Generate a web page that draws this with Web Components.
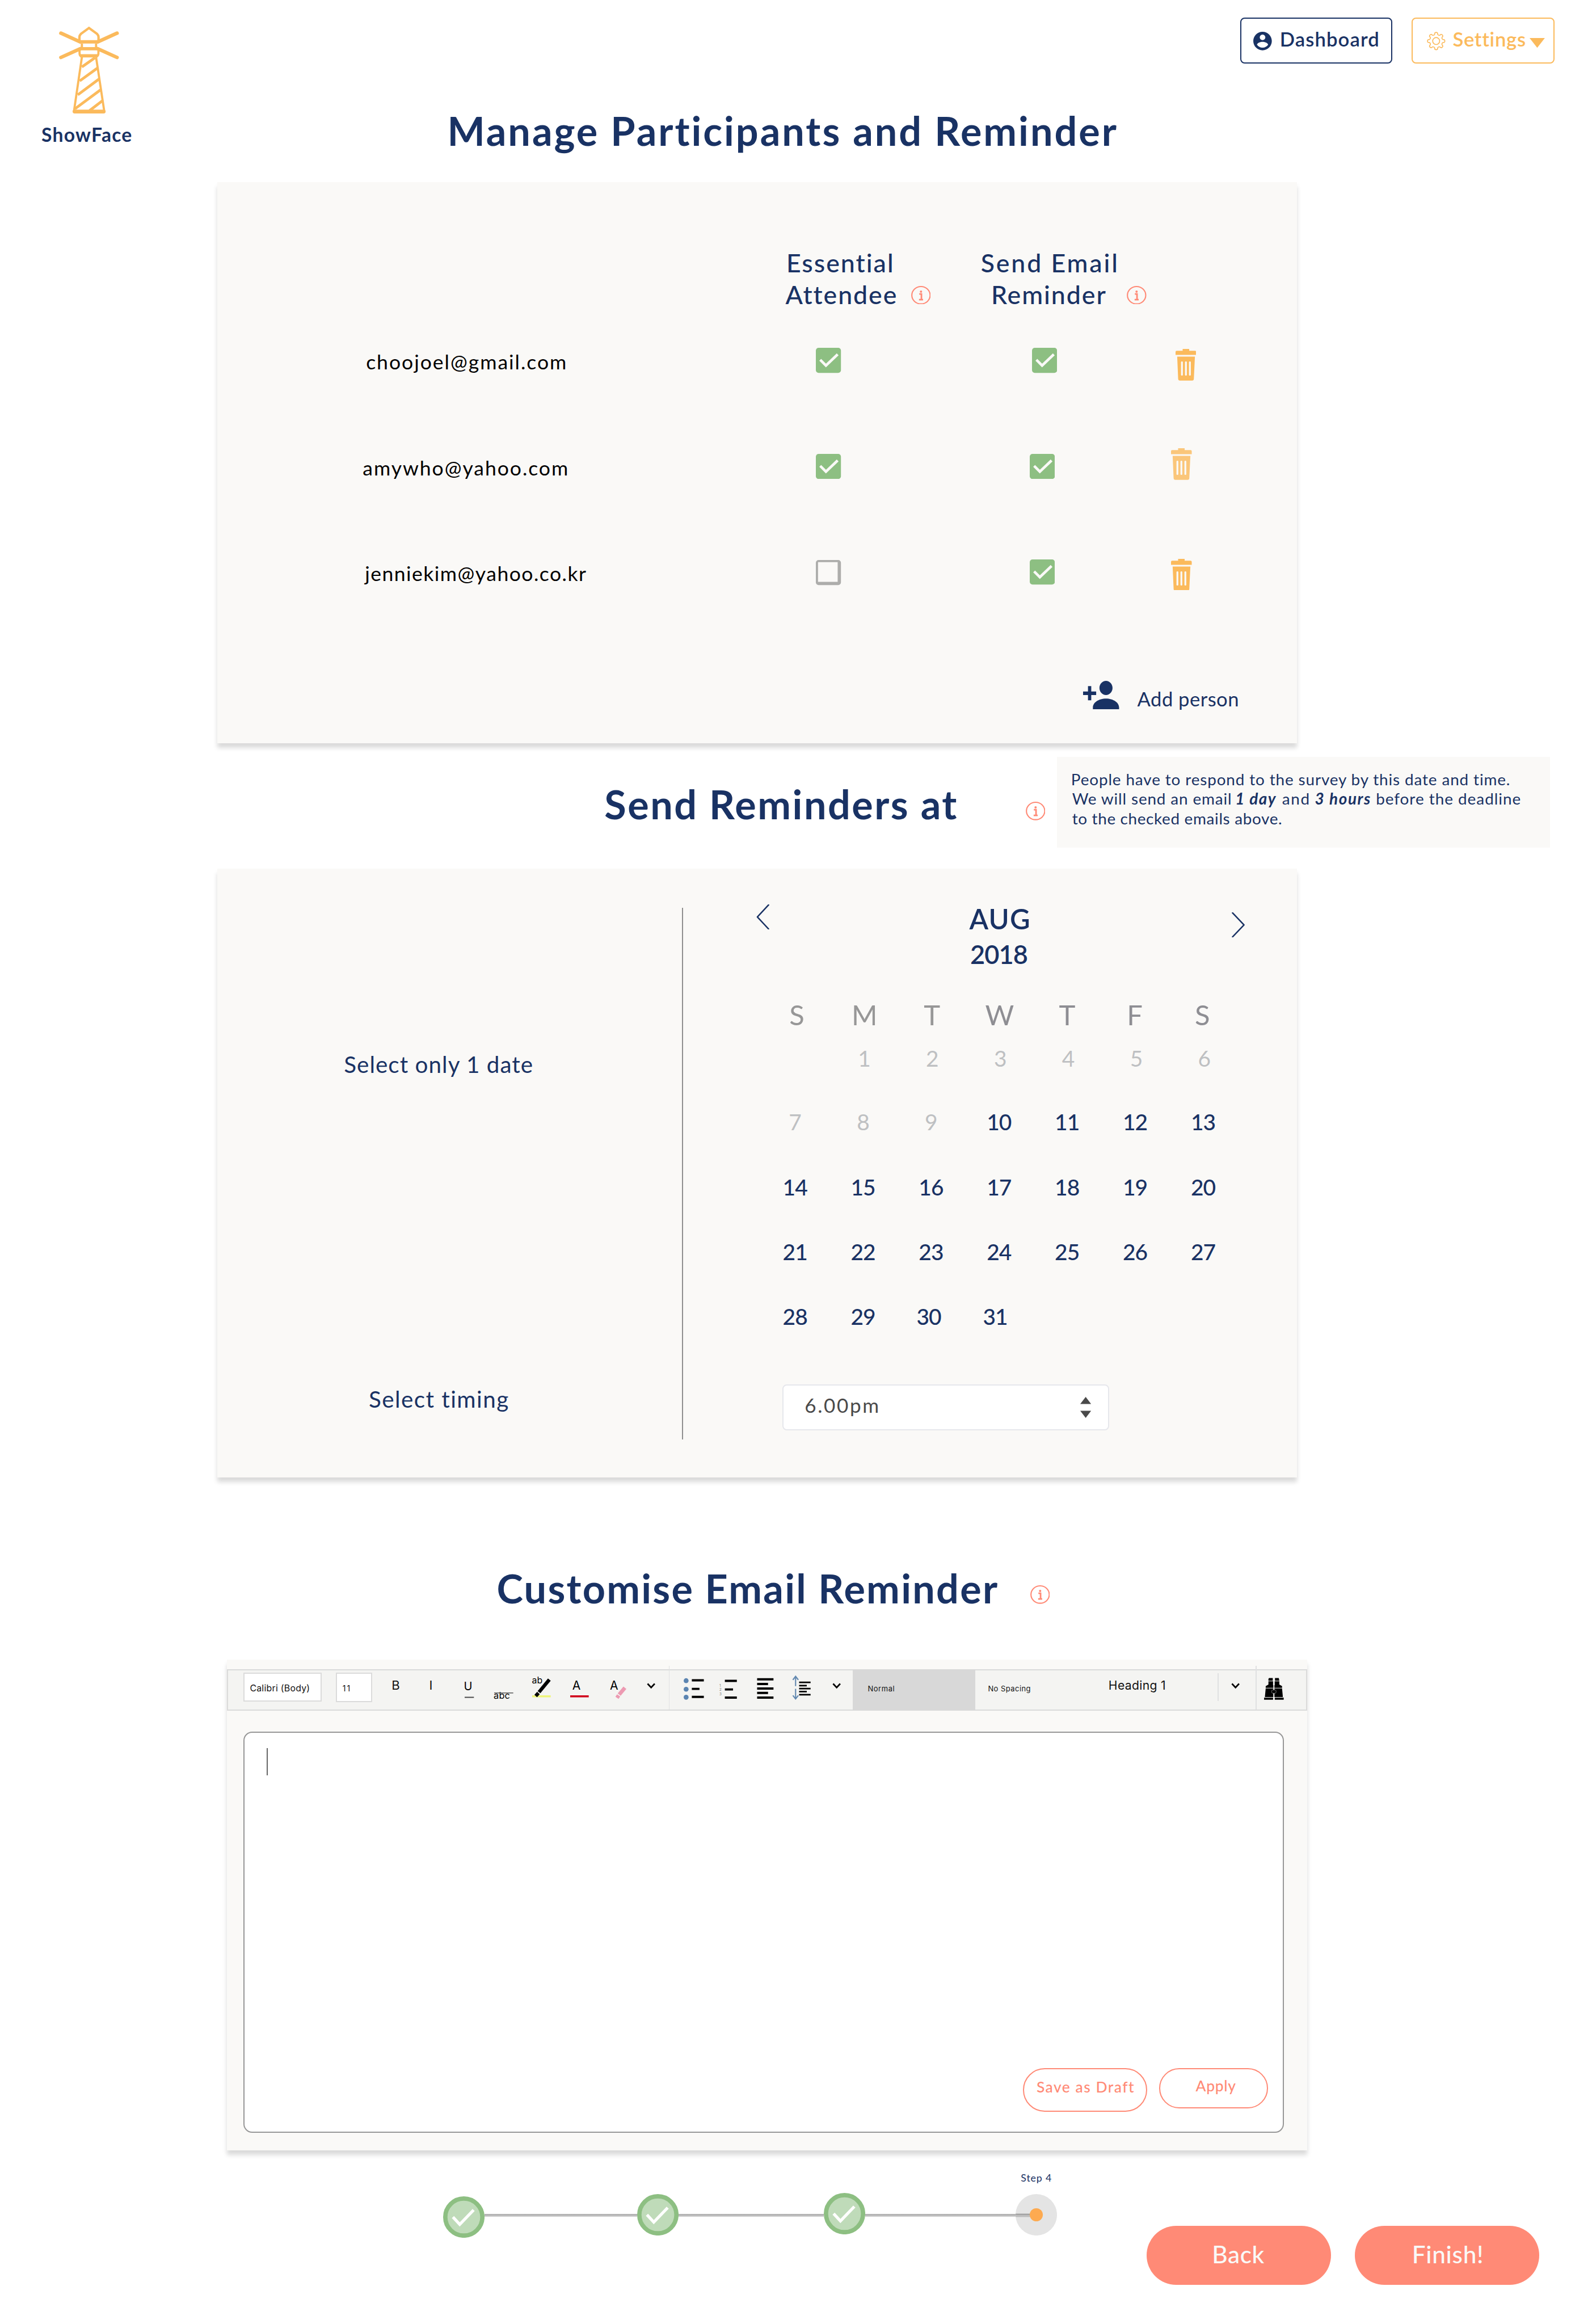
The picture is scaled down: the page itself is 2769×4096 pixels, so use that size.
<!DOCTYPE html>
<html lang="en">
<head>
<meta charset="utf-8">
<title>ShowFace</title>
<style>
html,body{margin:0;padding:0;background:#fff}
body{overflow:hidden}
show-face-app{zoom:.961458}
</style>
</head>
<body>
<show-face-app></show-face-app>
<script>
const NAVY='#193264', ORANGE='#FBBA5C', CORAL='#FF8A76', GREEN='#8DBF82';

function define(name, html, setup){
  customElements.define(name, class extends HTMLElement{
    connectedCallback(){
      if(this.shadowRoot) return;
      const root=this.attachShadow({mode:'open'});
      root.innerHTML=typeof html==='function'?html(this):html;
      if(setup) setup(this,root);
    }
  });
}

const ctx=document.createElement('canvas').getContext('2d');
/* Line height that puts the baseline of a family at the given fraction of the font size. */
function lineFor(family, base){
  ctx.font=`400 200px ${family}`;
  const m=ctx.measureText('H');
  return 2*(base-(m.fontBoundingBoxAscent-m.fontBoundingBoxDescent)/400);
}
const LATO_LINE=lineFor('Lato',.774), INTER_LINE=lineFor('Inter',.7276);

/* One line of text tracked out to a given ink width; the bottom of its box is the baseline. */
define('fit-text', el=>{
  const size=+el.getAttribute('size'), w=+el.getAttribute('w'), wt=el.getAttribute('weight')||400;
  const inter=el.hasAttribute('ui'), it=el.hasAttribute('italic')?'italic ':'';
  const fam=inter?'Inter':'Lato', text=el.textContent.trim();
  ctx.font=`${it}${wt} ${size}px ${fam}`;
  const m=ctx.measureText(text), n=text.length;
  const ink=m.actualBoundingBoxLeft+m.actualBoundingBoxRight;
  const ls=n>1?(w-ink)/(n-1):0;
  return `<style>:host{display:block;flex:none;width:${w}px;height:${size*(inter?.7276:.774)}px;
  font:${it}${wt} ${size}px/${(inter?INTER_LINE:LATO_LINE).toFixed(4)} ${fam},"Liberation Sans",sans-serif;white-space:nowrap;letter-spacing:${ls.toFixed(3)}px}
  span{display:block;margin-left:${m.actualBoundingBoxLeft.toFixed(2)}px}</style><span><slot></slot></span>`;
});

define('info-icon', `<style>:host{display:block;flex:none;width:36px;height:34px}svg{display:block}</style>
<svg width="36" height="34" viewBox="0 0 36 34" preserveAspectRatio="none" fill="none" stroke="${CORAL}" stroke-width="2.2">
<ellipse cx="18" cy="17" rx="16.8" ry="15.9"/><circle cx="18" cy="10.5" r="2.1" fill="${CORAL}" stroke="none"/>
<path d="M14.8 14.8h4v9.600M14.4 25h7.4" stroke-width="2.900"/></svg>`);

define('light-house', `<style>:host{display:block}svg{display:block}</style>
<svg width="112" height="162" viewBox="107 47 112 162" fill="none" stroke="${ORANGE}">
<g stroke-width="6.5" stroke-linecap="round"><path d="M111.5 61 147 77M214.500 61 179 77M111.500 105.500 147 89.500M214.500 105.500 179 89.500"/></g>
<path d="M145.500 76V68C145.500 65 147 63.500 148 62.500L163 51.500l15 11c1 1 2.500 2.500 2.500 5.500V76" stroke-width="4.400"/>
<path d="M146 77h34M146 89.500h34M147 102.500h32" stroke-width="6.200"/>
<path d="M150 80v7M176 80v7M145.700 92v6q0 4 2.500 5M180.300 92v6q0 4-2.500 5M150 105 135.500 204M176 105l15 99" stroke-width="4"/>
<path d="M174 106 150 123M178.500 125 146 148.500M181.500 145 142.500 174M184 165 137.500 199.500M187.500 185 164 203" stroke-width="5"/>
<path d="M136.500 204.700h53.500" stroke-width="7" stroke-linecap="round"/></svg>`);

define('account-icon', `<style>:host{display:block}svg{display:block}</style><svg width="34" height="34" viewBox="2 2 20 20"><path fill="${NAVY}" d="M12 2C6.480 2 2 6.480 2 12s4.480 10 10 10 10-4.480 10-10S17.520 2 12 2zm0 3c1.660 0 3 1.340 3 3s-1.340 3-3 3-3-1.340-3-3 1.340-3 3-3zm0 14.200c-2.500 0-4.710-1.280-6-3.220.030-1.990 4-3.080 6-3.080 1.990 0 5.970 1.090 6 3.080-1.290 1.940-3.500 3.220-6 3.220z"/></svg>`);

define('gear-icon', ()=>{
  let d='';
  const p=(r,a)=>{const t=a*Math.PI/180;return (17+r*Math.sin(t)).toFixed(2)+' '+(17-r*Math.cos(t)).toFixed(2)};
  for(let k=0;k<8;k++){const a=k*45;
    d+=(k?'L':'M')+p(12.6,a-13)+'L'+p(15.2,a-9)+'Q'+p(16.8,a)+' '+p(15.2,a+9)+'L'+p(12.6,a+13)+'Q'+p(10.8,a+22.5)+' '+p(12.6,a+32);}
  return `<style>:host{display:block}svg{display:block}</style><svg width="34" height="34" viewBox="0 0 34 34" fill="none" stroke="${ORANGE}" stroke-width="1.700" stroke-linejoin="round"><path d="${d}Z"/><circle cx="17" cy="17" r="6.400"/></svg>`;
});

define('check-box', el=>`<style>:host{display:block;flex:none;width:46px;height:46px}svg{display:block}</style>
<svg width="46" height="46" viewBox="0 0 46 46">${el.hasAttribute('checked')
 ?`<rect width="46" height="46" rx="5" fill="${GREEN}"/><path d="M8 22 18.500 32.500 40 12" fill="none" stroke="#FAF9F7" stroke-width="4.800"/>`
 :`<path fill="#ADADAB" fill-rule="evenodd" d="M5 0h36a5 5 0 0 1 5 5v36a5 5 0 0 1-5 5H5a5 5 0 0 1-5-5V5a5 5 0 0 1 5-5zM4 4v36h36V4z"/>`}</svg>`);

define('trash-icon', `<style>:host{display:block;flex:none}svg{display:block}</style>
<svg width="38" height="58" viewBox="0 0 38 58" fill="${ORANGE}"><path d="M13 0h12v3.500h11q2 0 2 2V11H0V5.500q0-2 2-2h11z"/>
<path fill-rule="evenodd" d="M3 14h32.500L33.500 55.500q-.2 2.500-2.500 2.500H7.500Q5 58 4.800 55.500zM11.700 23q-1.700 0-1.700 1.500v23q0 1.500 1.700 1.500t1.700-1.500v-23q0-1.500-1.700-1.500zm7.300 0q-1.700 0-1.700 1.500v23q0 1.500 1.700 1.500t1.700-1.500v-23q0-1.500-1.700-1.500zm7.300 0q-1.700 0-1.700 1.500v23q0 1.500 1.700 1.500t1.700-1.500v-23q0-1.500-1.700-1.500z"/></svg>`);

define('nav-button', `<style>:host{display:flex;box-sizing:border-box;height:84px;border:2.100px solid currentColor;border-radius:8px;padding-top:24px;align-items:flex-start;flex:none}</style><slot></slot>`);

define('page-header', `<style>:host{display:flex;align-items:flex-start;height:334px;color:${NAVY}}
.logo{width:825px;padding-top:47px;box-sizing:border-box}.logo light-house{margin-left:107px}.logo fit-text{margin:24px 0 0 76px}
.title{margin-top:211px}nav{display:flex;gap:36px;margin:32px 0 0 226px}</style>
<div class="logo"><light-house></light-house><fit-text size="35" w="165" weight="700">ShowFace</fit-text></div>
<fit-text class="title" size="73" w="1223" weight="700">Manage Participants and Reminder</fit-text>
<nav><nav-button style="width:278px;padding-left:22px"><account-icon></account-icon><fit-text style="margin-left:17px" size="36" w="177" weight="600">Dashboard</fit-text></nav-button>
<nav-button style="width:262px;padding-left:26px;color:${ORANGE}"><gear-icon></gear-icon><fit-text style="margin-left:13px" size="36" w="132" weight="600">Settings</fit-text>
<svg style="margin:12px 0 0 9px" width="28" height="18"><path d="M0 0h28L14 18z" fill="${ORANGE}"/></svg></nav-button></nav>`);

define('panel-card', `<style>:host{display:block;box-sizing:border-box;width:1980px;background:#FAF9F7;box-shadow:0 8px 8px rgba(0,0,0,.15)}</style><slot></slot>`);

define('person-row', el=>{const a=n=>el.getAttribute(n);return `<style>:host{display:flex;height:194px;align-items:flex-start}
.mail{width:1098px;flex:none}.mail fit-text{color:#000;margin-top:49.400px}
.one{width:392px;flex:none}.two{width:259px;flex:none;box-sizing:border-box}check-box{margin-top:38px}</style>
<div class="mail"><fit-text size="37" w="${a('mw')}" style="margin-left:${a('mx')}px;clip-path:inset(-12px -4px -6px -4px)">${a('mail')}</fit-text></div>
<div class="one"><check-box ${el.hasAttribute('essential')?'checked':'style="margin-top:39px"'}></check-box></div>
<div class="two" style="padding-left:${a('dx')}px"><check-box checked></check-box></div>
<trash-icon style="margin:${a('ty')}px 0 0 ${a('tx')}px;opacity:${a('fade')||1}"></trash-icon>`});

define('participants-card', `<style>:host{display:block;color:${NAVY}}panel-card{height:1028px;margin-left:398px;padding-top:130px}
.head{display:flex;height:136px;align-items:flex-start}.lab{flex:none}
.add{display:flex;align-items:flex-start;padding:66px 0 0 1588px}</style>
<panel-card><div class="head">
<div class="lab" style="width:200.500px;margin-left:1042px"><fit-text size="46.500" w="190" weight="500" style="margin-left:5.500px">Essential</fit-text><fit-text size="46.500" w="200.500" weight="500" style="margin-top:22px">Attendee</fit-text></div>
<info-icon style="margin:60px 0 0 29.500px"></info-icon>
<div class="lab" style="width:247px;margin-left:93px"><fit-text size="46.500" w="247" weight="500">Send Email</fit-text><fit-text size="46.500" w="206" weight="500" style="margin:22px 0 0 22px">Reminder</fit-text></div>
<info-icon style="margin:60px 0 0 20px"></info-icon></div>
<person-row mail="choojoel@gmail.com" mx="274" mw="365" essential dx="4" tx="8" ty="40"></person-row>
<person-row mail="amywho@yahoo.com" mx="268" mw="374" essential dx="0" tx="0" ty="28" fade=".8"></person-row>
<person-row mail="jenniekim@yahoo.co.kr" mx="269" mw="408" dx="0" tx="0" ty="36"></person-row>
<div class="add"><svg width="66" height="52" viewBox="1 4 22 16" preserveAspectRatio="none" fill="${NAVY}"><path d="M15 12c2.210 0 4-1.790 4-4s-1.790-4-4-4-4 1.790-4 4 1.790 4 4 4zm-9-2V7H4v3H1v2h3v3h2v-3h3v-2H6zm9 4c-4.420 0-8 2.200-8 5v1h16v-1c0-2.800-3.580-5-8-5z"/></svg>
<fit-text size="36" w="184" style="margin:20px 0 0 33px">Add person</fit-text></div></panel-card>`);

define('reminder-heading', `<style>:host{display:flex;align-items:flex-start;height:230px;color:${NAVY}}
.tip{box-sizing:border-box;width:904.500px;height:166px;background:#FAF9F7;margin:26px 0 0 21.500px;padding:29.500px 0 0 28px}
.tip>*{margin-bottom:13.600px}.l{display:flex}</style>
<fit-text size="73" w="645" weight="700" style="margin:83.500px 0 0 1109px">Send Reminders at</fit-text>
<info-icon style="margin:108px 0 0 126px"></info-icon>
<div class="tip"><fit-text size="29" w="804">People have to respond to the survey by this date and time.</fit-text>
<div class="l"><fit-text size="29" w="291">We will send an email</fit-text><fit-text size="29" w="73" weight="700" italic style="margin-left:10px">1 day</fit-text><fit-text size="29" w="49" style="margin-left:11px">and</fit-text><fit-text size="29" w="101" weight="700" italic style="margin-left:12px">3 hours</fit-text><fit-text size="29" w="263" style="margin-left:12px">before the deadline</fit-text></div>
<fit-text size="29" w="384">to the checked emails above.</fit-text></div>`);

define('month-calendar', ()=>{
  const rows=[[0,1,2,3,4,5,6],[7,8,9,10,11,12,13],[14,15,16,17,18,19,20],[21,22,23,24,25,26,27],[28,29,30,31]];
  const top=[44.3,84.8,87.8,87.3,86.3];
  const chev=d=>`<svg width="24" height="46" viewBox="-1 -1 24 46" fill="none" stroke="${NAVY}" stroke-width="2.600" stroke-linecap="round" stroke-linejoin="round"><path d="${d}"/></svg>`;
  return `<style>:host{display:block}.top{display:flex;align-items:flex-start;height:175.500px}.top svg{flex:none}
  .wk,.row{display:grid;text-align:center;line-height:${LATO_LINE.toFixed(4)}}
  .wk{grid-template-columns:repeat(7,123.900px);margin:72.300px 0 0 146px;font-size:51px;height:40.200px;color:#8E8E93}.wk span:nth-child(-n+3){color:#979797}
  .row{grid-template-columns:repeat(7,124.700px);margin-left:142px;font-size:40.500px;height:31.700px;font-weight:500;letter-spacing:-1px}.off{color:#BEC0C2;font-weight:400}</style>
  <div class="top"><div style="margin:66px 0 0 133px">${chev('M21.500 0 1 22 21.500 44')}</div>
  <div style="margin:72px 0 0 366px;width:111px"><fit-text size="51" w="110.500" weight="600">AUG</fit-text><fit-text size="47" w="103" weight="600" style="margin:27.500px 0 0 4.500px">2018</fit-text></div>
  <div style="margin:80px 0 0 371px">${chev('M.5 0 21.500 22 .5 44')}</div></div>
  <div class="wk">${[...'SMTWTFS'].map(c=>`<span>${c}</span>`).join('')}</div>
  ${rows.map((r,i)=>`<div class="row" style="margin-top:${top[i]}px;${i==0?'margin-left:144px':''}">${r.map(n=>n?`<span class="${n<10?'off':''}"${n>29?` style="margin-left:${n==30?-8:-14}px"`:''}>${n}</span>`:'<span></span>').join('')}</div>`).join('')}`;
});

define('time-select', `<style>:host{display:flex;align-items:flex-start;box-sizing:border-box;width:598.500px;height:84px;background:#fff;border:2.100px solid #E6E7EC;border-radius:8px;color:#4A4A4A}</style>
<fit-text size="36.500" w="133" style="margin:21.800px 0 0 39.500px">6.00pm</fit-text>
<svg style="margin:20.500px 0 0 371px" width="20" height="39" fill="#4A4A4A"><path d="M0 13 10 0l10 13zM0 25.500h20L10 38.500z"/></svg>`);

define('schedule-card', `<style>:host{display:block;color:${NAVY}}panel-card{height:1116px;margin-left:398px;}
.in{display:flex;align-items:flex-start}.left{width:852px;flex:none;padding-top:343px}.rule{width:2px;height:975px;margin-top:72px;background:#8F8F8F;flex:none}
.right{margin-left:1px}</style>
<panel-card><div class="in"><div class="left"><fit-text size="42" w="345" style="margin-left:233.500px">Select only 1 date</fit-text><fit-text size="42" w="255" style="margin:581px 0 0 279px">Select timing</fit-text></div>
<div class="rule"></div><div class="right"><month-calendar></month-calendar><time-select style="margin:109px 0 0 181.600px"></time-select></div></div></panel-card>`);

define('editor-toolbar', ()=>{
  const NAMES='Inter,"Liberation Sans",sans-serif';
  const g=(x,w,m,body)=>`<svg style="margin-left:${m}px" width="${w}" height="76" viewBox="${x} 0 ${w} 76" font-family='${NAMES}'>${body}</svg>`;
  const chev=(x,m)=>g(x,16,m,`<path d="M${x+1.5} 26.500 ${x+8} 33.500 ${x+14.5} 26.500" fill="none" stroke="#000" stroke-width="2.800"/>`);
  const bars=(x,ys,ws,t)=>`<path fill="#000" d="${ys.map((y,i)=>`M${x} ${y-t/2}h${ws[i]}v${t}h${-ws[i]}z`).join('')}"/>`;
  return `<style>:host{display:flex;align-items:flex-start;box-sizing:border-box;width:1980px;height:76px;background:#F4F4F2;box-shadow:inset 0 0 0 2px #DADADA;color:#111}
  svg{display:block;flex:none;overflow:visible}.f{box-sizing:border-box;background:#fff;border:2.100px solid #DBDBDB;flex:none}.s{flex:none;width:2px;background:#E0E1E2}.t{flex:none}</style>
  <div class="f" style="width:144px;height:53px;margin:6px 0 0 30px"><fit-text ui size="16.500" w="109" style="margin:21.500px 0 0 10px">Calibri (Body)</fit-text></div>
  <div class="f" style="width:66px;height:54px;margin:6px 0 0 26px"><fit-text ui size="14.500" w="13" style="margin:22px 0 0 10px">11</fit-text></div>
  <fit-text ui size="23" w="14" style="margin:20.300px 0 0 38px">B</fit-text>
  <fit-text ui size="23" w="4" style="margin:20.300px 0 0 55px">I</fit-text>
  ${g(435,18,58,'<text x="434.500" y="39" font-size="21">U</text><path d="M436 51.500h17" stroke="#444" stroke-width="2"/>')}
  ${g(490,35,37,'<text x="489" y="54" font-size="17" textLength="30">abc</text><path d="M490 43.500h35" stroke="#555" stroke-width="1.500"/>')}
  ${g(560,34,35,'<path d="M560 49.700h34" stroke="#EEF57A" stroke-width="3.500"/><text x="559.500" y="26" font-size="16.500">ab</text><path d="M591.500 19 572.500 42" stroke="#000" stroke-width="6.500"/><path d="M571.500 43.500 566.500 49" stroke="#000" stroke-width="6.500"/>')}
  ${g(629,34,35,'<text x="633" y="37" font-size="22">A</text><path d="M629 49.700h34" stroke="#D0021B" stroke-width="3.500"/>')}
  ${g(702,30,39,'<text x="702" y="37" font-size="22">A</text><path d="M729.500 34 719 46.500M718 48l-3 4.500" stroke="#EC9AB2" stroke-width="7"/>')}
  ${chev(770,38)}
  <div class="s" style="margin:-6px 0 0 24px;height:80px"></div>
  ${g(838,36,26,'<g fill="#5B84B1"><circle cx="842.500" cy="21" r="4.500"/><circle cx="842.500" cy="36.700" r="4.500"/><circle cx="842.500" cy="51.300" r="4.500"/></g>'+bars(853,[20.3,36,50.7],[22,14,22],4))}
  ${g(903,31,29,'<g font-size="6.500" fill="#777"><text x="903" y="32">1</text><text x="903" y="40">2</text><text x="903" y="48.300">3</text></g>'+bars(913,[21.3,37,52],[22,15,22],4))}
  ${g(972,30,38,bars(972.5,[18.5,27,35.3,43.5,52],[30,20,30,20,30],4.2))}
  ${g(1037,33,35,'<path d="M1042.500 13v18M1042.500 36v18M1037.500 19.500l5-6.500 5 6.500M1037.500 48l5 6.500 5-6.500" stroke="#6389B0" stroke-width="2.200" fill="none"/>'+bars(1049,[24,30,35.5,41,46.7],[21,14,21,14,21],3))}
  ${chev(1110,40)}
  <div class="t" style="width:224px;height:76px;background:#D8D8D8;margin-left:22px"><fit-text ui size="13.500" w="48" style="margin:31.300px 0 0 28px">Normal</fit-text></div>
  <fit-text ui size="13.500" w="77" style="margin:31px 0 0 24.500px">No Spacing</fit-text>
  <fit-text ui size="22" w="102" style="margin:22.300px 0 0 144px">Heading 1</fit-text>
  <div class="s" style="margin:7px 0 0 96.500px;height:51px"></div>
  ${chev(1841,23)}
  <div class="s" style="margin:-6px 0 0 29px;height:80px"></div>
  ${g(1902,36,14,`<g fill="#000"><path d="M1911 16h7v5h-8v-3zM1922 16h7l1 5h-8zM1910 22h8.500v7h3v-7h8.500v6l5 3v3h-30v-3l5-3zM1905 35h14.500v16H1903.500zM1920.500 35h14.500l1.500 16H1920.500zM1902 52h16.500v4H1902zM1921.500 52H1938v4h-16.500z"/></g><path d="M1920 29v27" stroke="#F4F4F2" stroke-width="2"/><rect x="1916" y="38" width="8" height="6" rx="2" fill="#000" stroke="#999" stroke-width=".8"/>`)}`;
});

define('outline-pill', `<style>:host{display:flex;align-items:flex-start;box-sizing:border-box;border:2.100px solid ${CORAL};border-radius:40px;color:${CORAL};flex:none}</style><slot></slot>`);

define('email-editor', `<style>:host{display:block;color:${NAVY}}.h{display:flex;align-items:flex-start;height:334px}
panel-card{height:900px;margin-left:416px;padding-top:18px}
.box{box-sizing:border-box;width:1908px;height:736px;margin:38px 0 0 30px;background:#fff;border:2.100px solid #979797;border-radius:16px;padding-top:28px}
.caret{width:2px;height:50px;background:#666;margin-left:40.500px}.b{display:flex;align-items:flex-start;gap:22px;margin:537px 0 0 1427px}</style>
<div class="h"><fit-text size="73" w="916" weight="700" style="margin:174.700px 0 0 912.500px">Customise Email Reminder</fit-text><info-icon style="margin:198px 0 0 60px"></info-icon></div>
<panel-card><editor-toolbar></editor-toolbar><div class="box"><div class="caret"></div><div class="b">
<outline-pill style="width:228px;height:80px"><fit-text size="27.500" w="178" weight="500" style="margin:21.700px 0 0 23px">Save as Draft</fit-text></outline-pill>
<outline-pill style="width:200px;height:74px"><fit-text size="27.500" w="74" weight="500" style="margin:19.700px 0 0 65px">Apply</fit-text></outline-pill></div></div></panel-card>`);

define('step-dot', el=>`<style>:host{display:block;flex:none}svg{display:block}</style><svg width="76" height="76" viewBox="-38 -38 76 76">${el.hasAttribute('current')
 ?`<circle r="38" fill="#E4E4E4"/><path fill="#A3A3A3" d="M-37.800-2H0v3h-37.800z"/><path fill="#BDBDBD" d="M-37.800 1H0v3h-37.800z"/><circle r="12" fill="#FDAA50"/>`
 :`<circle r="34" fill="#BFDBB9" stroke="${GREEN}" stroke-width="8"/><path d="M-20 0-7.500 13.500 18-13" fill="none" stroke="#fff" stroke-width="5.500"/>`}</svg>`);

define('pill-button', `<style>:host{display:flex;align-items:flex-start;box-sizing:border-box;width:338px;height:108px;border-radius:54px;background:${CORAL};color:#FAF9F7;padding-top:36px;flex:none;margin-top:138px}</style><slot></slot>`);

define('step-footer', `<style>:host{display:flex;align-items:flex-start;height:318px;padding-left:812px;color:${NAVY}}
.ln{flex:none;height:6px;margin-top:116px;background:linear-gradient(#B0B0B0,#B8B8B8 50%,#D6D6D6)}</style>
<step-dot style="margin-top:84px"></step-dot><div class="ln" style="width:280px"></div>
<step-dot style="margin-top:80px"></step-dot><div class="ln" style="width:266px"></div>
<step-dot style="margin-top:78px"></step-dot><div class="ln" style="width:276px"></div>
<div><fit-text size="18.500" w="56.500" style="margin:43.700px 0 0 9.500px">Step 4</fit-text><step-dot current style="margin-top:22px"></step-dot></div>
<pill-button style="margin-left:164px"><fit-text size="44" w="93" weight="500" style="margin-left:123px">Back</fit-text></pill-button>
<pill-button style="margin-left:44px"><fit-text size="44" w="125" weight="500" style="margin-left:107.500px">Finish!</fit-text></pill-button>`);

define('show-face-app', `<style>:host{display:block;width:2880px;height:4260px;overflow:hidden;background:#fff;font-family:Lato,"Liberation Sans",sans-serif}</style>
<page-header></page-header><participants-card></participants-card><reminder-heading></reminder-heading><schedule-card></schedule-card><email-editor></email-editor><step-footer></step-footer>`);
</script>
</body>
</html>
